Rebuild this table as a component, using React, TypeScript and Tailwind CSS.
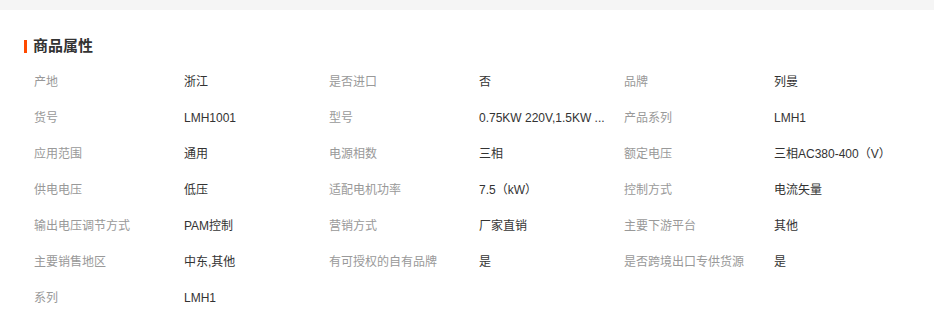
const attrs: [string, string][] = [
  ["产地", "浙江"],
  ["是否进口", "否"],
  ["品牌", "列曼"],
  ["货号", "LMH1001"],
  ["型号", "0.75KW 220V,1.5KW ..."],
  ["产品系列", "LMH1"],
  ["应用范围", "通用"],
  ["电源相数", "三相"],
  ["额定电压", "三相AC380-400（V）"],
  ["供电电压", "低压"],
  ["适配电机功率", "7.5（kW）"],
  ["控制方式", "电流矢量"],
  ["输出电压调节方式", "PAM控制"],
  ["营销方式", "厂家直销"],
  ["主要下游平台", "其他"],
  ["主要销售地区", "中东,其他"],
  ["有可授权的自有品牌", "是"],
  ["是否跨境出口专供货源", "是"],
  ["系列", "LMH1"],
];

export default function App() {
  return (
    <div
      className="w-[934px] h-[328px] bg-white overflow-hidden"
      style={{ fontFamily: '"Liberation Sans", "Noto Sans CJK SC", sans-serif' }}
    >
      <div className="h-[10px] bg-[#f5f5f5]" />

      <div className="pl-[24px] pt-[26px]">
        {/* section title */}
        <div className="flex items-center gap-[6px] h-[20px]">
          <span className="w-[3px] h-[13px] bg-[#ff4a00]" />
          <h3 className="text-[15px] font-bold text-[#333] leading-[20px]">商品属性</h3>
        </div>

        <div className="mt-[8px] pl-[10px] grid grid-cols-[150px_145px_150px_145px_150px_1fr] text-[12px]">
          {attrs.map(([label, value], i) => (
            <div key={i} className="contents">
              <div className="h-[36px] flex items-center text-[#999] whitespace-nowrap">{label}</div>
              <div className="h-[36px] flex items-center text-[#333] whitespace-nowrap">{value}</div>
            </div>
          ))}
        </div>
      </div>
    </div>
  );
}
